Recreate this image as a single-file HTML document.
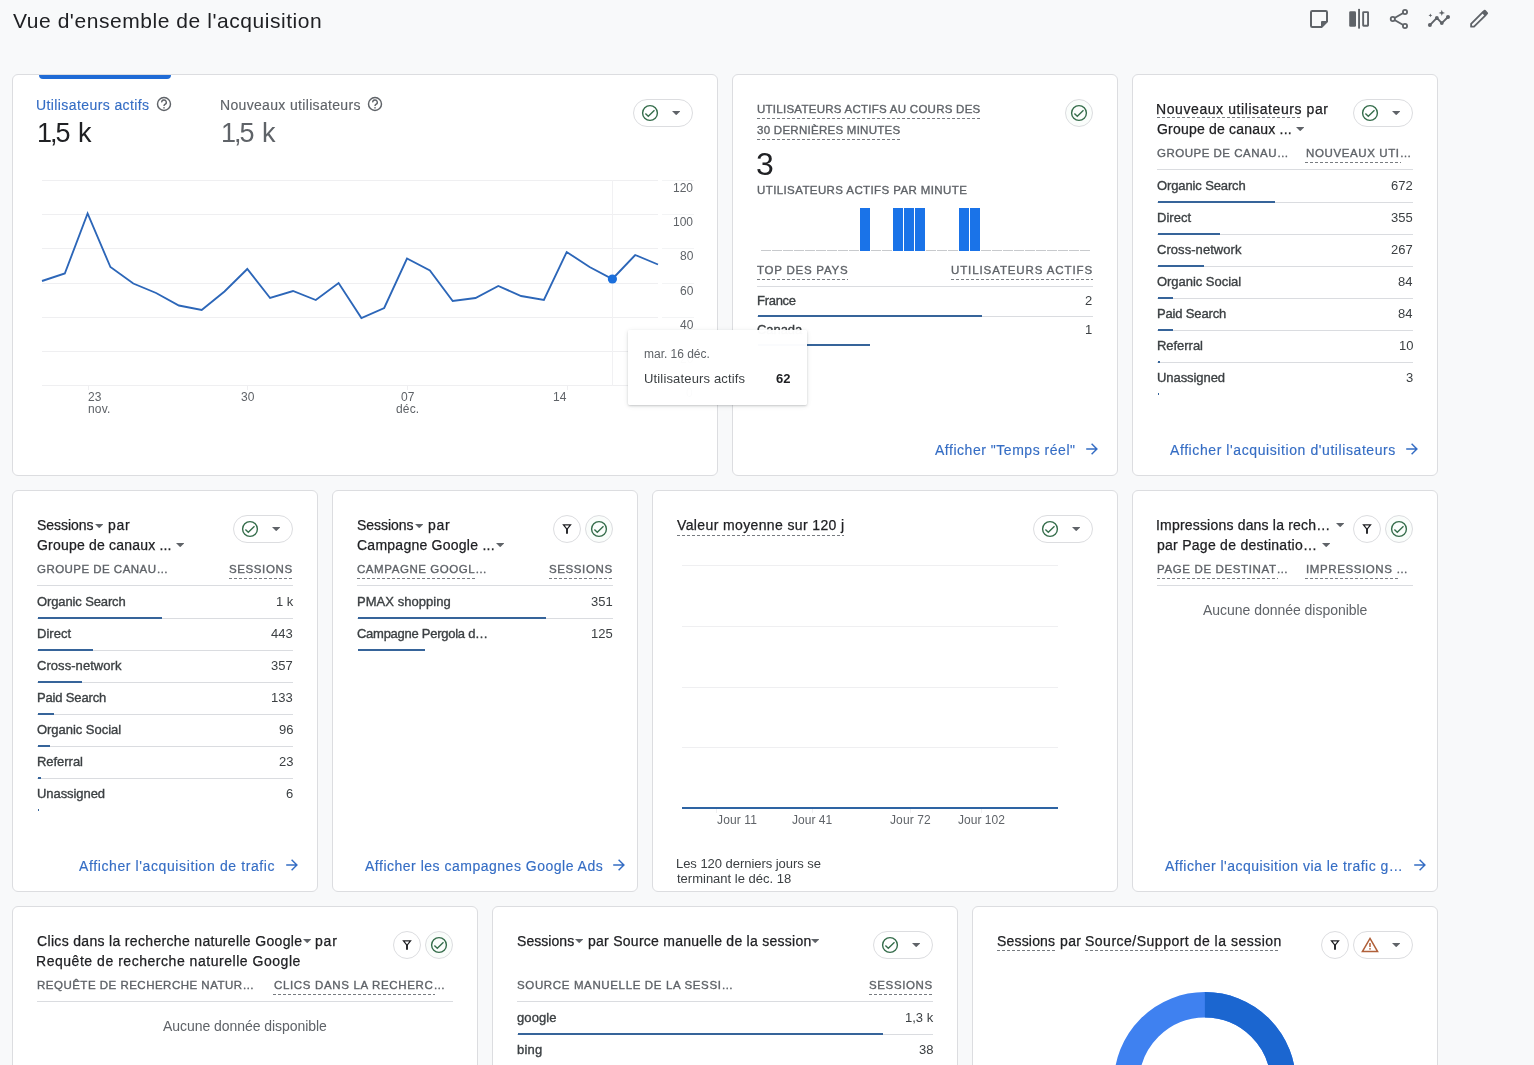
<!DOCTYPE html>
<html lang="fr"><head><meta charset="utf-8"><title>Vue d'ensemble de l'acquisition</title>
<style>
html,body{margin:0;padding:0;background:#f8f9fa}
html{width:1534px;height:1065px;overflow:hidden}
body{width:1534px;height:1065px;overflow:hidden;background:#f8f9fa;position:relative;font-family:"Liberation Sans", sans-serif;}
#root{position:absolute;left:0;top:0;width:1534px;height:1065px;overflow:hidden;background:#f8f9fa}
#root>div,#root>span,#root>svg{position:absolute;display:block}
span{white-space:pre;will-change:transform}
.card{box-sizing:border-box;background:#fff;border:1px solid #dcdde0;border-radius:6px}
</style></head>
<body>
<div id="root">
<svg style="left:1307px;top:7px" width="24" height="24" viewBox="0 0 24 24"><path d="M4 5.2Q4 4 5.2 4H18.8Q20 4 20 5.2V14.5L14.5 20H5.2Q4 20 4 18.8Z" fill="none" stroke="#5f6368" stroke-width="2" stroke-linejoin="round"/><path d="M14 20V15Q14 14 15 14H20Z" fill="#5f6368"/></svg>
<svg style="left:1347px;top:7px" width="24" height="24" viewBox="0 0 24 24"><rect x="2.2" y="4.2" width="6.8" height="15.5" rx="1.3" fill="#5f6368"/><rect x="11.1" y="1.9" width="1.9" height="19.7" fill="#5f6368"/><rect x="16.15" y="5.15" width="4.9" height="13.6" rx="0.4" fill="none" stroke="#5f6368" stroke-width="1.9"/></svg>
<svg style="left:1387px;top:7px" width="24" height="24" viewBox="0 0 24 24"><path d="M5.8 12L18 5M5.8 12L18 19" stroke="#5f6368" stroke-width="1.9" fill="none"/><circle cx="18" cy="5" r="2.1" fill="#f8f9fa" stroke="#5f6368" stroke-width="1.8"/><circle cx="5.8" cy="12" r="2.1" fill="#f8f9fa" stroke="#5f6368" stroke-width="1.8"/><circle cx="18" cy="19" r="2.1" fill="#f8f9fa" stroke="#5f6368" stroke-width="1.8"/></svg>
<svg style="left:1427px;top:7px" width="24" height="24" viewBox="0 0 24 24"><path d="M2.9 18.1L9.85 10.9L14.8 16.1L21 10" stroke="#5f6368" stroke-width="1.9" fill="none" stroke-linejoin="round"/><circle cx="2.9" cy="18.1" r="2" fill="#5f6368"/><circle cx="9.85" cy="10.9" r="1.9" fill="#5f6368"/><circle cx="14.8" cy="16.1" r="1.9" fill="#5f6368"/><circle cx="21" cy="10" r="2" fill="#5f6368"/><path d="M14.8 2.7L15.6 5.1L18 5.9L15.6 6.7L14.8 9.1L14 6.7L11.6 5.9L14 5.1Z" fill="#5f6368"/><path d="M3.4 6.5L3.95 7.85L5.3 8.4L3.95 8.95L3.4 10.3L2.85 8.95L1.5 8.4L2.85 7.85Z" fill="#5f6368"/></svg>
<svg style="left:1467px;top:7px" width="24" height="24" viewBox="0 0 24 24"><path d="M4.1 19.7V16.97L15.6 5.47L18.43 8.3L7.03 19.7Z" fill="none" stroke="#5f6368" stroke-width="1.8" stroke-linejoin="round"/><path d="M14.9 5.1L16.9 3.1Q17.7 2.4 18.5 3.1L20.8 5.4Q21.5 6.2 20.8 7L18.8 9Z" fill="#5f6368"/></svg>
<div class="card" style="left:12px;top:74px;width:706px;height:402px"></div>
<div class="card" style="left:732px;top:74px;width:386px;height:402px"></div>
<div class="card" style="left:1132px;top:74px;width:306px;height:402px"></div>
<div class="card" style="left:12px;top:490px;width:306px;height:402px"></div>
<div class="card" style="left:332px;top:490px;width:306px;height:402px"></div>
<div class="card" style="left:652px;top:490px;width:466px;height:402px"></div>
<div class="card" style="left:1132px;top:490px;width:306px;height:402px"></div>
<div class="card" style="left:12px;top:906px;width:466px;height:402px"></div>
<div class="card" style="left:492px;top:906px;width:466px;height:402px"></div>
<div class="card" style="left:972px;top:906px;width:466px;height:402px"></div>
<div style="left:38.5px;top:75px;width:132.5px;height:4px;background:#1f6bd6;border-radius:0 0 4px 4px"></div>
<svg style="left:155.7px;top:96px" width="16" height="16" viewBox="-8 -8 16 16"><circle r="6.5" fill="none" stroke="#5f6368" stroke-width="1.45"/><path d="M-2.3 -1.6A2.3 2.3 0 1 1 0.9 0.4Q0 1 0 2.1" fill="none" stroke="#5f6368" stroke-width="1.4"/><rect x="-0.7" y="3.1" width="1.4" height="1.4" fill="#5f6368"/></svg>
<svg style="left:367px;top:96px" width="16" height="16" viewBox="-8 -8 16 16"><circle r="6.5" fill="none" stroke="#5f6368" stroke-width="1.45"/><path d="M-2.3 -1.6A2.3 2.3 0 1 1 0.9 0.4Q0 1 0 2.1" fill="none" stroke="#5f6368" stroke-width="1.4"/><rect x="-0.7" y="3.1" width="1.4" height="1.4" fill="#5f6368"/></svg>
<div style="left:633px;top:99px;width:60px;height:28px;box-sizing:border-box;border:1px solid #dcdde0;border-radius:14.0px;background:#fff"></div>
<svg style="left:640px;top:103px" width="20" height="20" viewBox="-10 -10 20 20"><circle cx="0" cy="0" r="7.3999999999999995" fill="none" stroke="#356d4b" stroke-width="1.4"/><path d="M-4.6 0.4L-1.7 3.3L4.5 -2.8" fill="none" stroke="#356d4b" stroke-width="1.35" stroke-linecap="butt" stroke-linejoin="miter"/></svg>
<svg style="left:671.8px;top:111.10000000000001px" width="8.4" height="4.2" viewBox="0 0 10 5"><path d="M0 0H10L5 5Z" fill="#5f6368"/></svg>
<div style="left:42px;top:180px;width:616px;height:1px;background:#efeff1;"></div>
<div style="left:662px;top:180px;width:32px;height:1px;background:#f3f4f5;"></div>
<div style="left:42px;top:214px;width:616px;height:1px;background:#efeff1;"></div>
<div style="left:662px;top:214px;width:32px;height:1px;background:#f3f4f5;"></div>
<div style="left:42px;top:248px;width:616px;height:1px;background:#efeff1;"></div>
<div style="left:662px;top:248px;width:32px;height:1px;background:#f3f4f5;"></div>
<div style="left:42px;top:283px;width:616px;height:1px;background:#efeff1;"></div>
<div style="left:662px;top:283px;width:32px;height:1px;background:#f3f4f5;"></div>
<div style="left:42px;top:317px;width:616px;height:1px;background:#efeff1;"></div>
<div style="left:662px;top:317px;width:32px;height:1px;background:#f3f4f5;"></div>
<div style="left:42px;top:351px;width:616px;height:1px;background:#efeff1;"></div>
<div style="left:662px;top:351px;width:32px;height:1px;background:#f3f4f5;"></div>
<div style="left:42px;top:385px;width:616px;height:1px;background:#efeff1;"></div>
<div style="left:662px;top:385px;width:32px;height:1px;background:#f3f4f5;"></div>
<div style="left:612px;top:180px;width:1px;height:206px;background:#f1f1f3;"></div>
<svg style="left:0;top:0" width="720" height="420"><polyline points="42.0,281 64.8,273.5 87.6,213.5 110.4,267 133.3,283.5 156.1,293 178.9,305.5 201.7,310 224.5,291.5 247.3,269 270.1,298 293.0,291 315.8,300 338.6,283 361.4,318 384.2,308 407.0,258.5 429.9,270.5 452.7,301 475.5,298 498.3,286 521.1,296 543.9,300 566.7,252 589.6,267 612.4,279 635.2,255 658.0,264.5" fill="none" stroke="#2c66b8" stroke-width="1.85" stroke-linejoin="miter"/><circle cx="612.4" cy="279" r="4.6" fill="#1b6fdc"/></svg>
<div style="left:88px;top:386px;width:1px;height:4px;background:#efeff1;"></div>
<div style="left:247px;top:386px;width:1px;height:4px;background:#efeff1;"></div>
<div style="left:407px;top:386px;width:1px;height:4px;background:#efeff1;"></div>
<div style="left:567px;top:386px;width:1px;height:4px;background:#efeff1;"></div>
<div style="left:628px;top:330px;width:179px;height:75px;background:rgba(255,255,255,.975);border-radius:2px;box-shadow:0 1px 2px rgba(60,64,67,.22),0 1px 5px rgba(60,64,67,.12);z-index:5"></div>
<div style="left:757px;top:118px;width:223px;height:1px;background:repeating-linear-gradient(90deg,#777b80 0 3px,transparent 3px 5px)"></div>
<div style="left:757px;top:139px;width:143px;height:1px;background:repeating-linear-gradient(90deg,#777b80 0 3px,transparent 3px 5px)"></div>
<div style="left:1065px;top:99px;width:28px;height:28px;box-sizing:border-box;border:1px solid #dcdde0;border-radius:14.0px;background:#fafdfb"></div>
<svg style="left:1069px;top:103px" width="20" height="20" viewBox="-10 -10 20 20"><circle cx="0" cy="0" r="7.3999999999999995" fill="none" stroke="#356d4b" stroke-width="1.4"/><path d="M-4.6 0.4L-1.7 3.3L4.5 -2.8" fill="none" stroke="#356d4b" stroke-width="1.35" stroke-linecap="butt" stroke-linejoin="miter"/></svg>
<div style="left:761px;top:250px;width:10px;height:1px;background:#c8cacd;"></div>
<div style="left:772px;top:250px;width:10px;height:1px;background:#c8cacd;"></div>
<div style="left:783px;top:250px;width:10px;height:1px;background:#c8cacd;"></div>
<div style="left:794px;top:250px;width:10px;height:1px;background:#c8cacd;"></div>
<div style="left:805px;top:250px;width:10px;height:1px;background:#c8cacd;"></div>
<div style="left:816px;top:250px;width:10px;height:1px;background:#c8cacd;"></div>
<div style="left:827px;top:250px;width:10px;height:1px;background:#c8cacd;"></div>
<div style="left:838px;top:250px;width:10px;height:1px;background:#c8cacd;"></div>
<div style="left:849px;top:250px;width:10px;height:1px;background:#c8cacd;"></div>
<div style="left:860px;top:250px;width:10px;height:1px;background:#c8cacd;"></div>
<div style="left:860px;top:208px;width:10px;height:43px;background:#1a73e8;"></div>
<div style="left:871px;top:250px;width:10px;height:1px;background:#c8cacd;"></div>
<div style="left:882px;top:250px;width:10px;height:1px;background:#c8cacd;"></div>
<div style="left:893px;top:250px;width:10px;height:1px;background:#c8cacd;"></div>
<div style="left:893px;top:208px;width:10px;height:43px;background:#1a73e8;"></div>
<div style="left:904px;top:250px;width:10px;height:1px;background:#c8cacd;"></div>
<div style="left:904px;top:208px;width:10px;height:43px;background:#1a73e8;"></div>
<div style="left:915px;top:250px;width:10px;height:1px;background:#c8cacd;"></div>
<div style="left:915px;top:208px;width:10px;height:43px;background:#1a73e8;"></div>
<div style="left:926px;top:250px;width:10px;height:1px;background:#c8cacd;"></div>
<div style="left:937px;top:250px;width:10px;height:1px;background:#c8cacd;"></div>
<div style="left:948px;top:250px;width:10px;height:1px;background:#c8cacd;"></div>
<div style="left:959px;top:250px;width:10px;height:1px;background:#c8cacd;"></div>
<div style="left:959px;top:208px;width:10px;height:43px;background:#1a73e8;"></div>
<div style="left:970px;top:250px;width:10px;height:1px;background:#c8cacd;"></div>
<div style="left:970px;top:208px;width:10px;height:43px;background:#1a73e8;"></div>
<div style="left:981px;top:250px;width:10px;height:1px;background:#c8cacd;"></div>
<div style="left:992px;top:250px;width:10px;height:1px;background:#c8cacd;"></div>
<div style="left:1003px;top:250px;width:10px;height:1px;background:#c8cacd;"></div>
<div style="left:1014px;top:250px;width:10px;height:1px;background:#c8cacd;"></div>
<div style="left:1025px;top:250px;width:10px;height:1px;background:#c8cacd;"></div>
<div style="left:1036px;top:250px;width:10px;height:1px;background:#c8cacd;"></div>
<div style="left:1047px;top:250px;width:10px;height:1px;background:#c8cacd;"></div>
<div style="left:1058px;top:250px;width:10px;height:1px;background:#c8cacd;"></div>
<div style="left:1069px;top:250px;width:10px;height:1px;background:#c8cacd;"></div>
<div style="left:1080px;top:250px;width:10px;height:1px;background:#c8cacd;"></div>
<div style="left:757px;top:279px;width:90.5px;height:1px;background:repeating-linear-gradient(90deg,#777b80 0 3px,transparent 3px 5px)"></div>
<div style="left:951px;top:279px;width:141.5px;height:1px;background:repeating-linear-gradient(90deg,#777b80 0 3px,transparent 3px 5px)"></div>
<div style="left:757px;top:286px;width:336px;height:1px;background:#dadce0;"></div>
<div style="left:757px;top:316px;width:336px;height:1px;background:#dadce0;"></div>
<div style="left:757.5px;top:315px;width:224.5px;height:2px;background:#36649a;"></div>
<div style="left:757.5px;top:344px;width:112.5px;height:2px;background:#36649a;"></div>
<svg style="left:1085.4px;top:440.9px" width="15" height="16" viewBox="-1 -8 15 16"><path d="M0.2 0H10.8M5.6 -5.3L10.9 0L5.6 5.3" fill="none" stroke="#356dc4" stroke-width="1.45"/></svg>
<div style="left:1157px;top:117px;width:145px;height:1px;background:repeating-linear-gradient(90deg,#777b80 0 3px,transparent 3px 5px)"></div>
<svg style="left:1295.6px;top:126.70000000000002px" width="8.4" height="4.2" viewBox="0 0 10 5"><path d="M0 0H10L5 5Z" fill="#5f6368"/></svg>
<div style="left:1353px;top:99px;width:60px;height:28px;box-sizing:border-box;border:1px solid #dcdde0;border-radius:14.0px;background:#fff"></div>
<svg style="left:1360px;top:103px" width="20" height="20" viewBox="-10 -10 20 20"><circle cx="0" cy="0" r="7.3999999999999995" fill="none" stroke="#356d4b" stroke-width="1.4"/><path d="M-4.6 0.4L-1.7 3.3L4.5 -2.8" fill="none" stroke="#356d4b" stroke-width="1.35" stroke-linecap="butt" stroke-linejoin="miter"/></svg>
<svg style="left:1391.8px;top:111.10000000000001px" width="8.4" height="4.2" viewBox="0 0 10 5"><path d="M0 0H10L5 5Z" fill="#5f6368"/></svg>
<div style="left:1305px;top:162px;width:96px;height:1px;background:repeating-linear-gradient(90deg,#777b80 0 3px,transparent 3px 5px)"></div>
<div style="left:1157px;top:169px;width:256px;height:1px;background:#dadce0;"></div>
<div style="left:1157px;top:202px;width:256px;height:1px;background:#dadce0;"></div>
<div style="left:1157.5px;top:201px;width:117px;height:2px;background:#36649a;"></div>
<div style="left:1157px;top:234px;width:256px;height:1px;background:#dadce0;"></div>
<div style="left:1157.5px;top:233px;width:62px;height:2px;background:#36649a;"></div>
<div style="left:1157px;top:266px;width:256px;height:1px;background:#dadce0;"></div>
<div style="left:1157.5px;top:265px;width:46px;height:2px;background:#36649a;"></div>
<div style="left:1157px;top:298px;width:256px;height:1px;background:#dadce0;"></div>
<div style="left:1157.5px;top:297px;width:15px;height:2px;background:#36649a;"></div>
<div style="left:1157px;top:330px;width:256px;height:1px;background:#dadce0;"></div>
<div style="left:1157.5px;top:329px;width:15px;height:2px;background:#36649a;"></div>
<div style="left:1157px;top:362px;width:256px;height:1px;background:#dadce0;"></div>
<div style="left:1157.5px;top:361px;width:2px;height:2px;background:#36649a;"></div>
<div style="left:1157.5px;top:393px;width:0.7px;height:2px;background:#36649a;"></div>
<svg style="left:1405.4px;top:440.9px" width="15" height="16" viewBox="-1 -8 15 16"><path d="M0.2 0H10.8M5.6 -5.3L10.9 0L5.6 5.3" fill="none" stroke="#356dc4" stroke-width="1.45"/></svg>
<svg style="left:94.8px;top:523.5px" width="8.4" height="4.2" viewBox="0 0 10 5"><path d="M0 0H10L5 5Z" fill="#5f6368"/></svg>
<svg style="left:175.8px;top:543.1px" width="8.4" height="4.2" viewBox="0 0 10 5"><path d="M0 0H10L5 5Z" fill="#5f6368"/></svg>
<div style="left:233px;top:515px;width:60px;height:28px;box-sizing:border-box;border:1px solid #dcdde0;border-radius:14.0px;background:#fff"></div>
<svg style="left:240px;top:519px" width="20" height="20" viewBox="-10 -10 20 20"><circle cx="0" cy="0" r="7.3999999999999995" fill="none" stroke="#356d4b" stroke-width="1.4"/><path d="M-4.6 0.4L-1.7 3.3L4.5 -2.8" fill="none" stroke="#356d4b" stroke-width="1.35" stroke-linecap="butt" stroke-linejoin="miter"/></svg>
<svg style="left:271.8px;top:527.1px" width="8.4" height="4.2" viewBox="0 0 10 5"><path d="M0 0H10L5 5Z" fill="#5f6368"/></svg>
<div style="left:229px;top:578px;width:64px;height:1px;background:repeating-linear-gradient(90deg,#777b80 0 3px,transparent 3px 5px)"></div>
<div style="left:37px;top:585px;width:256px;height:1px;background:#dadce0;"></div>
<div style="left:37px;top:618px;width:256px;height:1px;background:#dadce0;"></div>
<div style="left:37.5px;top:617px;width:124px;height:2px;background:#36649a;"></div>
<div style="left:37px;top:650px;width:256px;height:1px;background:#dadce0;"></div>
<div style="left:37.5px;top:649px;width:55px;height:2px;background:#36649a;"></div>
<div style="left:37px;top:682px;width:256px;height:1px;background:#dadce0;"></div>
<div style="left:37.5px;top:681px;width:44px;height:2px;background:#36649a;"></div>
<div style="left:37px;top:714px;width:256px;height:1px;background:#dadce0;"></div>
<div style="left:37.5px;top:713px;width:16.5px;height:2px;background:#36649a;"></div>
<div style="left:37px;top:746px;width:256px;height:1px;background:#dadce0;"></div>
<div style="left:37.5px;top:745px;width:12px;height:2px;background:#36649a;"></div>
<div style="left:37px;top:778px;width:256px;height:1px;background:#dadce0;"></div>
<div style="left:37.5px;top:777px;width:3px;height:2px;background:#36649a;"></div>
<div style="left:37.5px;top:809px;width:1px;height:2px;background:#36649a;"></div>
<svg style="left:285.4px;top:856.9px" width="15" height="16" viewBox="-1 -8 15 16"><path d="M0.2 0H10.8M5.6 -5.3L10.9 0L5.6 5.3" fill="none" stroke="#356dc4" stroke-width="1.45"/></svg>
<svg style="left:414.8px;top:523.5px" width="8.4" height="4.2" viewBox="0 0 10 5"><path d="M0 0H10L5 5Z" fill="#5f6368"/></svg>
<svg style="left:495.8px;top:543.1px" width="8.4" height="4.2" viewBox="0 0 10 5"><path d="M0 0H10L5 5Z" fill="#5f6368"/></svg>
<div style="left:553px;top:515px;width:28px;height:28px;box-sizing:border-box;border:1px solid #dcdde0;border-radius:14.0px;background:#fff"></div>
<svg style="left:560px;top:522px" width="14" height="14" viewBox="-7 -7 14 14"><path d="M-3.5 -4.05H3.5L0 0.3Z" fill="none" stroke="#202124" stroke-width="1.25" stroke-linejoin="miter"/><path d="M0 0V4" fill="none" stroke="#202124" stroke-width="1.9" stroke-linecap="round"/></svg>
<div style="left:585px;top:515px;width:28px;height:28px;box-sizing:border-box;border:1px solid #dcdde0;border-radius:14.0px;background:#fafdfb"></div>
<svg style="left:589px;top:519px" width="20" height="20" viewBox="-10 -10 20 20"><circle cx="0" cy="0" r="7.3999999999999995" fill="none" stroke="#356d4b" stroke-width="1.4"/><path d="M-4.6 0.4L-1.7 3.3L4.5 -2.8" fill="none" stroke="#356d4b" stroke-width="1.35" stroke-linecap="butt" stroke-linejoin="miter"/></svg>
<div style="left:357px;top:578px;width:120px;height:1px;background:repeating-linear-gradient(90deg,#777b80 0 3px,transparent 3px 5px)"></div>
<div style="left:549px;top:578px;width:64px;height:1px;background:repeating-linear-gradient(90deg,#777b80 0 3px,transparent 3px 5px)"></div>
<div style="left:357px;top:585px;width:256px;height:1px;background:#dadce0;"></div>
<div style="left:357px;top:618px;width:256px;height:1px;background:#dadce0;"></div>
<div style="left:357.5px;top:617px;width:188px;height:2px;background:#36649a;"></div>
<div style="left:357.5px;top:649px;width:67px;height:2px;background:#36649a;"></div>
<svg style="left:611.9px;top:856.9px" width="15" height="16" viewBox="-1 -8 15 16"><path d="M0.2 0H10.8M5.6 -5.3L10.9 0L5.6 5.3" fill="none" stroke="#356dc4" stroke-width="1.45"/></svg>
<div style="left:677px;top:535px;width:167px;height:1px;background:repeating-linear-gradient(90deg,#777b80 0 3px,transparent 3px 5px)"></div>
<div style="left:1033px;top:515px;width:60px;height:28px;box-sizing:border-box;border:1px solid #dcdde0;border-radius:14.0px;background:#fff"></div>
<svg style="left:1040px;top:519px" width="20" height="20" viewBox="-10 -10 20 20"><circle cx="0" cy="0" r="7.3999999999999995" fill="none" stroke="#356d4b" stroke-width="1.4"/><path d="M-4.6 0.4L-1.7 3.3L4.5 -2.8" fill="none" stroke="#356d4b" stroke-width="1.35" stroke-linecap="butt" stroke-linejoin="miter"/></svg>
<svg style="left:1071.8px;top:527.1px" width="8.4" height="4.2" viewBox="0 0 10 5"><path d="M0 0H10L5 5Z" fill="#5f6368"/></svg>
<div style="left:682px;top:565px;width:376px;height:1px;background:#efeff1;"></div>
<div style="left:682px;top:626px;width:376px;height:1px;background:#efeff1;"></div>
<div style="left:682px;top:687px;width:376px;height:1px;background:#efeff1;"></div>
<div style="left:682px;top:747px;width:376px;height:1px;background:#efeff1;"></div>
<div style="left:682px;top:807px;width:376px;height:2px;background:#2e64a3;"></div>
<div style="left:716px;top:809px;width:1px;height:4px;background:#efeff1;"></div>
<div style="left:812px;top:809px;width:1px;height:4px;background:#efeff1;"></div>
<div style="left:910px;top:809px;width:1px;height:4px;background:#efeff1;"></div>
<div style="left:981px;top:809px;width:1px;height:4px;background:#efeff1;"></div>
<svg style="left:1335.8px;top:522.9px" width="8.4" height="4.2" viewBox="0 0 10 5"><path d="M0 0H10L5 5Z" fill="#5f6368"/></svg>
<svg style="left:1321.8px;top:542.9px" width="8.4" height="4.2" viewBox="0 0 10 5"><path d="M0 0H10L5 5Z" fill="#5f6368"/></svg>
<div style="left:1353px;top:515px;width:28px;height:28px;box-sizing:border-box;border:1px solid #dcdde0;border-radius:14.0px;background:#fff"></div>
<svg style="left:1360px;top:522px" width="14" height="14" viewBox="-7 -7 14 14"><path d="M-3.5 -4.05H3.5L0 0.3Z" fill="none" stroke="#202124" stroke-width="1.25" stroke-linejoin="miter"/><path d="M0 0V4" fill="none" stroke="#202124" stroke-width="1.9" stroke-linecap="round"/></svg>
<div style="left:1385px;top:515px;width:28px;height:28px;box-sizing:border-box;border:1px solid #dcdde0;border-radius:14.0px;background:#fafdfb"></div>
<svg style="left:1389px;top:519px" width="20" height="20" viewBox="-10 -10 20 20"><circle cx="0" cy="0" r="7.3999999999999995" fill="none" stroke="#356d4b" stroke-width="1.4"/><path d="M-4.6 0.4L-1.7 3.3L4.5 -2.8" fill="none" stroke="#356d4b" stroke-width="1.35" stroke-linecap="butt" stroke-linejoin="miter"/></svg>
<div style="left:1157px;top:578px;width:121px;height:1px;background:repeating-linear-gradient(90deg,#777b80 0 3px,transparent 3px 5px)"></div>
<div style="left:1305px;top:578px;width:93px;height:1px;background:repeating-linear-gradient(90deg,#777b80 0 3px,transparent 3px 5px)"></div>
<div style="left:1157px;top:585px;width:256px;height:1px;background:#dadce0;"></div>
<svg style="left:1413.4px;top:856.9px" width="15" height="16" viewBox="-1 -8 15 16"><path d="M0.2 0H10.8M5.6 -5.3L10.9 0L5.6 5.3" fill="none" stroke="#356dc4" stroke-width="1.45"/></svg>
<svg style="left:302.5px;top:939.1px" width="8.4" height="4.2" viewBox="0 0 10 5"><path d="M0 0H10L5 5Z" fill="#5f6368"/></svg>
<div style="left:393px;top:931px;width:28px;height:28px;box-sizing:border-box;border:1px solid #dcdde0;border-radius:14.0px;background:#fff"></div>
<svg style="left:400px;top:938px" width="14" height="14" viewBox="-7 -7 14 14"><path d="M-3.5 -4.05H3.5L0 0.3Z" fill="none" stroke="#202124" stroke-width="1.25" stroke-linejoin="miter"/><path d="M0 0V4" fill="none" stroke="#202124" stroke-width="1.9" stroke-linecap="round"/></svg>
<div style="left:425px;top:931px;width:28px;height:28px;box-sizing:border-box;border:1px solid #dcdde0;border-radius:14.0px;background:#fafdfb"></div>
<svg style="left:429px;top:935px" width="20" height="20" viewBox="-10 -10 20 20"><circle cx="0" cy="0" r="7.3999999999999995" fill="none" stroke="#356d4b" stroke-width="1.4"/><path d="M-4.6 0.4L-1.7 3.3L4.5 -2.8" fill="none" stroke="#356d4b" stroke-width="1.35" stroke-linecap="butt" stroke-linejoin="miter"/></svg>
<div style="left:273px;top:994px;width:162px;height:1px;background:repeating-linear-gradient(90deg,#777b80 0 3px,transparent 3px 5px)"></div>
<div style="left:37px;top:1001px;width:416px;height:1px;background:#dadce0;"></div>
<svg style="left:574.5999999999999px;top:939.1px" width="8.4" height="4.2" viewBox="0 0 10 5"><path d="M0 0H10L5 5Z" fill="#5f6368"/></svg>
<svg style="left:810.8px;top:939.1px" width="8.4" height="4.2" viewBox="0 0 10 5"><path d="M0 0H10L5 5Z" fill="#5f6368"/></svg>
<div style="left:873px;top:931px;width:60px;height:28px;box-sizing:border-box;border:1px solid #dcdde0;border-radius:14.0px;background:#fff"></div>
<svg style="left:880px;top:935px" width="20" height="20" viewBox="-10 -10 20 20"><circle cx="0" cy="0" r="7.3999999999999995" fill="none" stroke="#356d4b" stroke-width="1.4"/><path d="M-4.6 0.4L-1.7 3.3L4.5 -2.8" fill="none" stroke="#356d4b" stroke-width="1.35" stroke-linecap="butt" stroke-linejoin="miter"/></svg>
<svg style="left:911.8px;top:943.1px" width="8.4" height="4.2" viewBox="0 0 10 5"><path d="M0 0H10L5 5Z" fill="#5f6368"/></svg>
<div style="left:869px;top:994px;width:64px;height:1px;background:repeating-linear-gradient(90deg,#777b80 0 3px,transparent 3px 5px)"></div>
<div style="left:517px;top:1001px;width:416px;height:1px;background:#dadce0;"></div>
<div style="left:517px;top:1033.7px;width:416px;height:1px;background:#dadce0;"></div>
<div style="left:517.5px;top:1032.7px;width:365px;height:2px;background:#36649a;"></div>
<div style="left:517px;top:1065.7px;width:416px;height:1px;background:#dadce0;"></div>
<div style="left:997px;top:950px;width:58px;height:1px;background:repeating-linear-gradient(90deg,#777b80 0 3px,transparent 3px 5px)"></div>
<div style="left:1085px;top:950px;width:195px;height:1px;background:repeating-linear-gradient(90deg,#777b80 0 3px,transparent 3px 5px)"></div>
<div style="left:1321px;top:931px;width:28px;height:28px;box-sizing:border-box;border:1px solid #dcdde0;border-radius:14.0px;background:#fff"></div>
<svg style="left:1328px;top:938px" width="14" height="14" viewBox="-7 -7 14 14"><path d="M-3.5 -4.05H3.5L0 0.3Z" fill="none" stroke="#202124" stroke-width="1.25" stroke-linejoin="miter"/><path d="M0 0V4" fill="none" stroke="#202124" stroke-width="1.9" stroke-linecap="round"/></svg>
<div style="left:1353px;top:931px;width:60px;height:28px;box-sizing:border-box;border:1px solid #dcdde0;border-radius:14.0px;background:#fff"></div>
<svg style="left:1359.7px;top:934.8px" width="20" height="20" viewBox="-10 -10 20 20"><path d="M0 -6.6L7.6 6.6H-7.6Z" fill="none" stroke="#b0603a" stroke-width="1.5" stroke-linejoin="miter"/><rect x="-0.75" y="-2" width="1.5" height="4" fill="#b0603a"/><rect x="-0.75" y="3.1" width="1.5" height="1.5" fill="#b0603a"/></svg>
<svg style="left:1391.8px;top:943.1px" width="8.4" height="4.2" viewBox="0 0 10 5"><path d="M0 0H10L5 5Z" fill="#5f6368"/></svg>
<svg style="left:1100px;top:985px" width="210" height="80" viewBox="1100 985 210 80"><circle cx="1204.9" cy="1083.1" r="78.35" fill="none" stroke="#3f81f0" stroke-width="25.299999999999997"/><path d="M1204.9 1004.7499999999999A78.35 78.35 0 0 1 1283.25 1083.1" fill="none" stroke="#1b66d0" stroke-width="25.299999999999997"/></svg>
<span style="left:13.42px;top:10px;font-size:21px;line-height:21px;color:#202124;letter-spacing:0.555px;">Vue d'ensemble de l'acquisition</span>
<span style="left:36.41px;top:98px;font-size:14px;line-height:14px;color:#356dc4;letter-spacing:0.406px;-webkit-text-stroke:0.15px #356dc4;">Utilisateurs actifs</span>
<span style="left:36.51px;top:120px;font-size:27px;line-height:27px;color:#202124;letter-spacing:-2.065px;">1,5</span>
<span style="left:77.62px;top:120px;font-size:27px;line-height:27px;color:#202124;">k</span>
<span style="left:220.29px;top:98px;font-size:14px;line-height:14px;color:#5f6368;letter-spacing:0.331px;-webkit-text-stroke:0.15px #5f6368;">Nouveaux utilisateurs</span>
<span style="left:220.51px;top:120px;font-size:27px;line-height:27px;color:#5f6368;letter-spacing:-2.065px;">1,5</span>
<span style="left:261.62px;top:120px;font-size:27px;line-height:27px;color:#5f6368;">k</span>
<span style="left:673.25px;top:182px;font-size:12px;line-height:12px;color:#5f6368;">120</span>
<span style="left:673.25px;top:216px;font-size:12px;line-height:12px;color:#5f6368;">100</span>
<span style="left:680.11px;top:250px;font-size:12px;line-height:12px;color:#5f6368;">80</span>
<span style="left:680.11px;top:285px;font-size:12px;line-height:12px;color:#5f6368;">60</span>
<span style="left:680.11px;top:319px;font-size:12px;line-height:12px;color:#5f6368;">40</span>
<span style="left:680.11px;top:353px;font-size:12px;line-height:12px;color:#5f6368;">20</span>
<span style="left:686.35px;top:387px;font-size:12px;line-height:12px;color:#5f6368;">0</span>
<span style="left:88.17px;top:391px;font-size:12px;line-height:12px;color:#5f6368;">23</span>
<span style="left:88.10px;top:403px;font-size:12px;line-height:12px;color:#5f6368;letter-spacing:0.176px;">nov.</span>
<span style="left:241.16px;top:391px;font-size:12px;line-height:12px;color:#5f6368;">30</span>
<span style="left:400.73px;top:391px;font-size:12px;line-height:12px;color:#5f6368;">07</span>
<span style="left:396.21px;top:403px;font-size:12px;line-height:12px;color:#5f6368;letter-spacing:0.174px;">déc.</span>
<span style="left:552.95px;top:391px;font-size:12px;line-height:12px;color:#5f6368;">14</span>
<span style="left:644.10px;top:348px;font-size:12px;line-height:12px;color:#5f6368;letter-spacing:-0.019px;z-index:6;">mar. 16 déc.</span>
<span style="left:643.61px;top:372px;font-size:13px;line-height:13px;color:#3c4043;letter-spacing:0.157px;z-index:6;">Utilisateurs actifs</span>
<span style="left:776.05px;top:372px;font-size:13px;line-height:13px;color:#202124;font-weight:700;z-index:6;">62</span>
<span style="left:756.96px;top:104px;font-size:11.5px;line-height:11.5px;color:#5f6368;letter-spacing:0.263px;-webkit-text-stroke:0.35px #5f6368;">UTILISATEURS ACTIFS AU COURS DES</span>
<span style="left:757.05px;top:125px;font-size:11.5px;line-height:11.5px;color:#5f6368;letter-spacing:0.271px;-webkit-text-stroke:0.35px #5f6368;">30 DERNIÈRES MINUTES</span>
<span style="left:756.15px;top:148px;font-size:32px;line-height:32px;color:#202124;">3</span>
<span style="left:756.96px;top:185px;font-size:11.5px;line-height:11.5px;color:#5f6368;letter-spacing:0.398px;-webkit-text-stroke:0.35px #5f6368;">UTILISATEURS ACTIFS PAR MINUTE</span>
<span style="left:757.18px;top:265px;font-size:11.5px;line-height:11.5px;color:#5f6368;letter-spacing:0.757px;-webkit-text-stroke:0.35px #5f6368;">TOP DES PAYS</span>
<span style="left:951.06px;top:265px;font-size:11.5px;line-height:11.5px;color:#5f6368;letter-spacing:0.897px;-webkit-text-stroke:0.35px #5f6368;">UTILISATEURS ACTIFS</span>
<span style="left:757.00px;top:294px;font-size:13px;line-height:13px;color:#3c4043;letter-spacing:-0.285px;-webkit-text-stroke:0.35px #3c4043;">France</span>
<span style="left:1085.18px;top:294px;font-size:13px;line-height:13px;color:#3c4043;">2</span>
<span style="left:757.00px;top:323px;font-size:13px;line-height:13px;color:#3c4043;letter-spacing:-0.066px;-webkit-text-stroke:0.35px #3c4043;">Canada</span>
<span style="left:1085.17px;top:323px;font-size:13px;line-height:13px;color:#3c4043;">1</span>
<span style="left:935.06px;top:443px;font-size:14px;line-height:14px;color:#356dc4;letter-spacing:0.526px;-webkit-text-stroke:0.15px #356dc4;">Afficher "Temps réel"</span>
<span style="left:1156.12px;top:102px;font-size:14px;line-height:14px;color:#202124;letter-spacing:0.582px;-webkit-text-stroke:0.25px #202124;">Nouveaux utilisateurs par</span>
<span style="left:1156.89px;top:122px;font-size:14px;line-height:14px;color:#202124;letter-spacing:0.207px;-webkit-text-stroke:0.25px #202124;">Groupe de canaux ...</span>
<span style="left:1156.97px;top:148px;font-size:11.5px;line-height:11.5px;color:#5f6368;letter-spacing:0.499px;-webkit-text-stroke:0.35px #5f6368;">GROUPE DE CANAU…</span>
<span style="left:1305.85px;top:148px;font-size:11.5px;line-height:11.5px;color:#5f6368;letter-spacing:0.616px;-webkit-text-stroke:0.35px #5f6368;">NOUVEAUX UTI…</span>
<span style="left:1157.00px;top:179px;font-size:13px;line-height:13px;color:#3c4043;letter-spacing:-0.125px;-webkit-text-stroke:0.35px #3c4043;">Organic Search</span>
<span style="left:1390.89px;top:179px;font-size:13px;line-height:13px;color:#3c4043;">672</span>
<span style="left:1157.00px;top:211px;font-size:13px;line-height:13px;color:#3c4043;letter-spacing:0.013px;-webkit-text-stroke:0.35px #3c4043;">Direct</span>
<span style="left:1390.88px;top:211px;font-size:13px;line-height:13px;color:#3c4043;">355</span>
<span style="left:1157.00px;top:243px;font-size:13px;line-height:13px;color:#3c4043;letter-spacing:0.056px;-webkit-text-stroke:0.35px #3c4043;">Cross-network</span>
<span style="left:1390.89px;top:243px;font-size:13px;line-height:13px;color:#3c4043;">267</span>
<span style="left:1157.00px;top:275px;font-size:13px;line-height:13px;color:#3c4043;letter-spacing:-0.033px;-webkit-text-stroke:0.35px #3c4043;">Organic Social</span>
<span style="left:1397.88px;top:275px;font-size:13px;line-height:13px;color:#3c4043;">84</span>
<span style="left:1157.00px;top:307px;font-size:13px;line-height:13px;color:#3c4043;letter-spacing:-0.162px;-webkit-text-stroke:0.35px #3c4043;">Paid Search</span>
<span style="left:1397.88px;top:307px;font-size:13px;line-height:13px;color:#3c4043;">84</span>
<span style="left:1157.00px;top:339px;font-size:13px;line-height:13px;color:#3c4043;letter-spacing:-0.040px;-webkit-text-stroke:0.35px #3c4043;">Referral</span>
<span style="left:1398.59px;top:339px;font-size:13px;line-height:13px;color:#3c4043;">10</span>
<span style="left:1157.00px;top:371px;font-size:13px;line-height:13px;color:#3c4043;letter-spacing:-0.069px;-webkit-text-stroke:0.35px #3c4043;">Unassigned</span>
<span style="left:1405.67px;top:371px;font-size:13px;line-height:13px;color:#3c4043;">3</span>
<span style="left:1169.56px;top:443px;font-size:14px;line-height:14px;color:#356dc4;letter-spacing:0.585px;-webkit-text-stroke:0.15px #356dc4;">Afficher l'acquisition d'utilisateurs</span>
<span style="left:36.93px;top:518px;font-size:14px;line-height:14px;color:#202124;letter-spacing:-0.034px;-webkit-text-stroke:0.25px #202124;">Sessions</span>
<span style="left:107.63px;top:518px;font-size:14px;line-height:14px;color:#202124;letter-spacing:0.674px;-webkit-text-stroke:0.25px #202124;">par</span>
<span style="left:36.99px;top:538px;font-size:14px;line-height:14px;color:#202124;letter-spacing:0.196px;-webkit-text-stroke:0.25px #202124;">Groupe de canaux ...</span>
<span style="left:37.07px;top:564px;font-size:11.5px;line-height:11.5px;color:#5f6368;letter-spacing:0.465px;-webkit-text-stroke:0.35px #5f6368;">GROUPE DE CANAU…</span>
<span style="left:229.24px;top:564px;font-size:11.5px;line-height:11.5px;color:#5f6368;letter-spacing:0.609px;-webkit-text-stroke:0.35px #5f6368;">SESSIONS</span>
<span style="left:37.00px;top:595px;font-size:13px;line-height:13px;color:#3c4043;letter-spacing:-0.125px;-webkit-text-stroke:0.35px #3c4043;">Organic Search</span>
<span style="left:275.60px;top:595px;font-size:13px;line-height:13px;color:#3c4043;">1 k</span>
<span style="left:37.00px;top:627px;font-size:13px;line-height:13px;color:#3c4043;letter-spacing:0.013px;-webkit-text-stroke:0.35px #3c4043;">Direct</span>
<span style="left:270.88px;top:627px;font-size:13px;line-height:13px;color:#3c4043;">443</span>
<span style="left:37.00px;top:659px;font-size:13px;line-height:13px;color:#3c4043;letter-spacing:0.056px;-webkit-text-stroke:0.35px #3c4043;">Cross-network</span>
<span style="left:270.89px;top:659px;font-size:13px;line-height:13px;color:#3c4043;">357</span>
<span style="left:37.00px;top:691px;font-size:13px;line-height:13px;color:#3c4043;letter-spacing:-0.162px;-webkit-text-stroke:0.35px #3c4043;">Paid Search</span>
<span style="left:270.88px;top:691px;font-size:13px;line-height:13px;color:#3c4043;">133</span>
<span style="left:37.00px;top:723px;font-size:13px;line-height:13px;color:#3c4043;letter-spacing:-0.033px;-webkit-text-stroke:0.35px #3c4043;">Organic Social</span>
<span style="left:278.61px;top:723px;font-size:13px;line-height:13px;color:#3c4043;">96</span>
<span style="left:37.00px;top:755px;font-size:13px;line-height:13px;color:#3c4043;letter-spacing:-0.040px;-webkit-text-stroke:0.35px #3c4043;">Referral</span>
<span style="left:278.60px;top:755px;font-size:13px;line-height:13px;color:#3c4043;">23</span>
<span style="left:37.00px;top:787px;font-size:13px;line-height:13px;color:#3c4043;letter-spacing:-0.069px;-webkit-text-stroke:0.35px #3c4043;">Unassigned</span>
<span style="left:285.68px;top:787px;font-size:13px;line-height:13px;color:#3c4043;">6</span>
<span style="left:78.86px;top:859px;font-size:14px;line-height:14px;color:#356dc4;letter-spacing:0.607px;-webkit-text-stroke:0.15px #356dc4;">Afficher l'acquisition de trafic</span>
<span style="left:356.93px;top:518px;font-size:14px;line-height:14px;color:#202124;letter-spacing:-0.034px;-webkit-text-stroke:0.25px #202124;">Sessions</span>
<span style="left:427.63px;top:518px;font-size:14px;line-height:14px;color:#202124;letter-spacing:0.674px;-webkit-text-stroke:0.25px #202124;">par</span>
<span style="left:356.99px;top:538px;font-size:14px;line-height:14px;color:#202124;letter-spacing:0.249px;-webkit-text-stroke:0.25px #202124;">Campagne Google ...</span>
<span style="left:357.07px;top:564px;font-size:11.5px;line-height:11.5px;color:#5f6368;letter-spacing:0.570px;-webkit-text-stroke:0.35px #5f6368;">CAMPAGNE GOOGL…</span>
<span style="left:549.24px;top:564px;font-size:11.5px;line-height:11.5px;color:#5f6368;letter-spacing:0.609px;-webkit-text-stroke:0.35px #5f6368;">SESSIONS</span>
<span style="left:357.00px;top:595px;font-size:13px;line-height:13px;color:#3c4043;letter-spacing:0.048px;-webkit-text-stroke:0.35px #3c4043;">PMAX shopping</span>
<span style="left:590.88px;top:595px;font-size:13px;line-height:13px;color:#3c4043;">351</span>
<span style="left:357.00px;top:627px;font-size:13px;line-height:13px;color:#3c4043;letter-spacing:-0.264px;-webkit-text-stroke:0.35px #3c4043;">Campagne Pergola d…</span>
<span style="left:590.88px;top:627px;font-size:13px;line-height:13px;color:#3c4043;">125</span>
<span style="left:364.86px;top:859px;font-size:14px;line-height:14px;color:#356dc4;letter-spacing:0.506px;-webkit-text-stroke:0.15px #356dc4;">Afficher les campagnes Google Ads</span>
<span style="left:677.30px;top:518px;font-size:14px;line-height:14px;color:#202124;letter-spacing:0.374px;-webkit-text-stroke:0.25px #202124;">Valeur moyenne sur 120 j</span>
<span style="left:717.36px;top:814px;font-size:12px;line-height:12px;color:#5f6368;letter-spacing:0.134px;">Jour 11</span>
<span style="left:791.76px;top:814px;font-size:12px;line-height:12px;color:#5f6368;letter-spacing:0.036px;">Jour 41</span>
<span style="left:889.56px;top:814px;font-size:12px;line-height:12px;color:#5f6368;letter-spacing:0.121px;">Jour 72</span>
<span style="left:957.76px;top:814px;font-size:12px;line-height:12px;color:#5f6368;letter-spacing:0.018px;">Jour 102</span>
<span style="left:676.31px;top:857px;font-size:13px;line-height:13px;color:#3c4043;letter-spacing:-0.043px;">Les 120 derniers jours se</span>
<span style="left:677.18px;top:872px;font-size:13px;line-height:13px;color:#3c4043;">terminant le déc. 18</span>
<span style="left:1156.08px;top:518px;font-size:14px;line-height:14px;color:#202124;letter-spacing:0.191px;-webkit-text-stroke:0.25px #202124;">Impressions dans la rech…</span>
<span style="left:1156.83px;top:538px;font-size:14px;line-height:14px;color:#202124;letter-spacing:0.268px;-webkit-text-stroke:0.25px #202124;">par Page de destinatio…</span>
<span style="left:1156.85px;top:564px;font-size:11.5px;line-height:11.5px;color:#5f6368;letter-spacing:0.631px;-webkit-text-stroke:0.35px #5f6368;">PAGE DE DESTINAT…</span>
<span style="left:1305.80px;top:564px;font-size:11.5px;line-height:11.5px;color:#5f6368;letter-spacing:0.596px;-webkit-text-stroke:0.35px #5f6368;">IMPRESSIONS …</span>
<span style="left:1202.94px;top:603px;font-size:14px;line-height:14px;color:#5f6368;letter-spacing:-0.029px;">Aucune donnée disponible</span>
<span style="left:1164.86px;top:859px;font-size:14px;line-height:14px;color:#356dc4;letter-spacing:0.481px;-webkit-text-stroke:0.15px #356dc4;">Afficher l'acquisition via le trafic g…</span>
<span style="left:36.89px;top:934px;font-size:14px;line-height:14px;color:#202124;letter-spacing:0.329px;-webkit-text-stroke:0.25px #202124;">Clics dans la recherche naturelle Google</span>
<span style="left:315.13px;top:934px;font-size:14px;line-height:14px;color:#202124;letter-spacing:0.824px;-webkit-text-stroke:0.25px #202124;">par</span>
<span style="left:36.12px;top:954px;font-size:14px;line-height:14px;color:#202124;letter-spacing:0.533px;-webkit-text-stroke:0.25px #202124;">Requête de recherche naturelle Google</span>
<span style="left:36.85px;top:980px;font-size:11.5px;line-height:11.5px;color:#5f6368;letter-spacing:0.494px;-webkit-text-stroke:0.35px #5f6368;">REQUÊTE DE RECHERCHE NATUR…</span>
<span style="left:273.57px;top:980px;font-size:11.5px;line-height:11.5px;color:#5f6368;letter-spacing:0.658px;-webkit-text-stroke:0.35px #5f6368;">CLICS DANS LA RECHERC…</span>
<span style="left:163.14px;top:1019px;font-size:14px;line-height:14px;color:#5f6368;letter-spacing:-0.055px;">Aucune donnée disponible</span>
<span style="left:516.83px;top:934px;font-size:14px;line-height:14px;color:#202124;letter-spacing:0.051px;-webkit-text-stroke:0.25px #202124;">Sessions</span>
<span style="left:587.53px;top:934px;font-size:14px;line-height:14px;color:#202124;letter-spacing:0.264px;-webkit-text-stroke:0.25px #202124;">par Source manuelle de la session</span>
<span style="left:516.94px;top:980px;font-size:11.5px;line-height:11.5px;color:#5f6368;letter-spacing:0.641px;-webkit-text-stroke:0.35px #5f6368;">SOURCE MANUELLE DE LA SESSI…</span>
<span style="left:869.24px;top:980px;font-size:11.5px;line-height:11.5px;color:#5f6368;letter-spacing:0.623px;-webkit-text-stroke:0.35px #5f6368;">SESSIONS</span>
<span style="left:517.00px;top:1011px;font-size:13px;line-height:13px;color:#3c4043;letter-spacing:0.095px;-webkit-text-stroke:0.35px #3c4043;">google</span>
<span style="left:904.60px;top:1011px;font-size:13px;line-height:13px;color:#3c4043;">1,3 k</span>
<span style="left:517.00px;top:1043px;font-size:13px;line-height:13px;color:#3c4043;letter-spacing:0.199px;-webkit-text-stroke:0.35px #3c4043;">bing</span>
<span style="left:918.60px;top:1043px;font-size:13px;line-height:13px;color:#3c4043;">38</span>
<span style="left:997.03px;top:934px;font-size:14px;line-height:14px;color:#202124;letter-spacing:0.180px;-webkit-text-stroke:0.25px #202124;">Sessions</span>
<span style="left:1059.63px;top:934px;font-size:14px;line-height:14px;color:#202124;letter-spacing:0.374px;-webkit-text-stroke:0.25px #202124;">par</span>
<span style="left:1084.63px;top:934px;font-size:14px;line-height:14px;color:#202124;letter-spacing:0.498px;-webkit-text-stroke:0.25px #202124;">Source/Support de la session</span>
</div>
</body></html>
